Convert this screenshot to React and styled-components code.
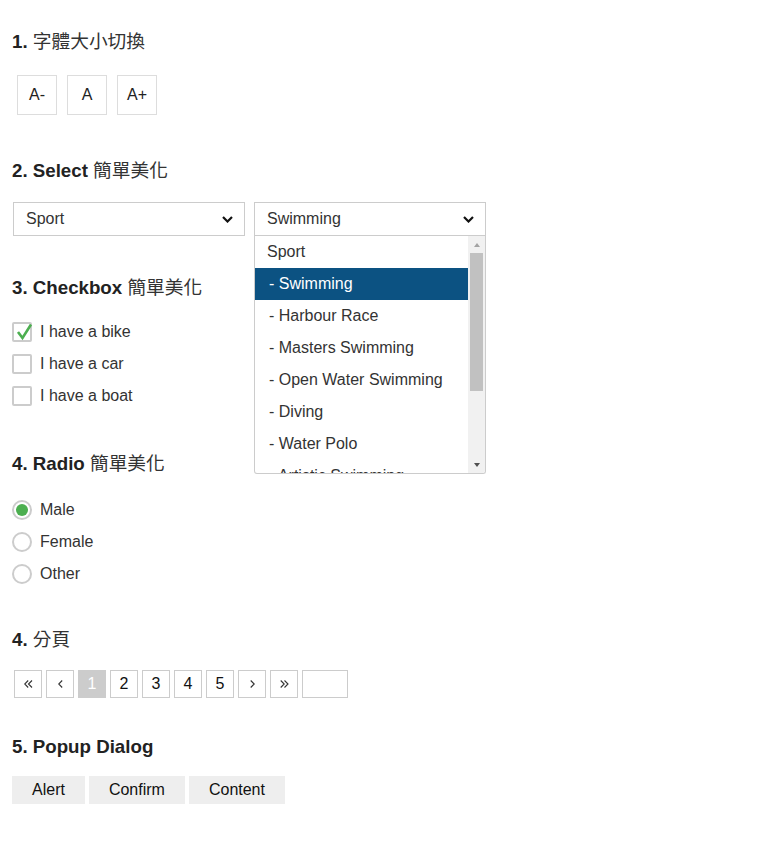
import React, { useState } from 'react';
import styled, { createGlobalStyle } from 'styled-components';

const GlobalStyle = createGlobalStyle`
  body {
    margin: 0;
    background: #fff;
    color: #333;
    font-family: "Liberation Sans", Arial, "Noto Sans CJK TC", sans-serif;
    font-size: 16px;
  }
`;

const sports = [
  { label: 'Sport', sub: false },
  { label: '- Swimming', sub: true },
  { label: '- Harbour Race', sub: true },
  { label: '- Masters Swimming', sub: true },
  { label: '- Open Water Swimming', sub: true },
  { label: '- Diving', sub: true },
  { label: '- Water Polo', sub: true },
  { label: '- Artistic Swimming', sub: true },
];

const Chevron = () => (
  <svg width="11" height="7" viewBox="0 0 11 7">
    <polyline points="1,1 5.5,5.5 10,1" fill="none" stroke="#111" strokeWidth="2.2" />
  </svg>
);

// pager arrows: dir -1 = left, 1 = right; double draws two angles
const PagerArrow = ({ dir, double }) => {
  const one = x => (dir < 0 ? `${x + 3.5},0.5 ${x},4 ${x + 3.5},7.5` : `${x},0.5 ${x + 3.5},4 ${x},7.5`);
  return (
    <svg width={double ? 9 : 5} height="8" viewBox={`0 0 ${double ? 9 : 5} 8`}>
      <polyline points={one(0.7)} fill="none" stroke="#333" strokeWidth="1.1" />
      {double && <polyline points={one(4.5)} fill="none" stroke="#333" strokeWidth="1.1" />}
    </svg>
  );
};

function SelectBox({ value, open }) {
  return (
    <SelectWrap>
      <SelectField>
        <span>{value}</span>
        <Chevron />
      </SelectField>
      {open && (
        <DropList>
          <Options>
            {sports.map(s => (
              <Option key={s.label} $sub={s.sub} $active={s.label === '- Swimming'}>
                {s.label}
              </Option>
            ))}
          </Options>
          <ScrollBar>
            <Arrow $up $color="#a3a3a3" />
            <Thumb />
            <Arrow $color="#505050" />
          </ScrollBar>
        </DropList>
      )}
    </SelectWrap>
  );
}

export default function App() {
  const [size, setSize] = useState(16);
  return (
    <Page>
      <GlobalStyle />
      <Section $top={30}>
        <Heading $mb={16}>
          1. <Cjk>字體大小切換</Cjk>
        </Heading>
        <Row>
          <FontButton onClick={() => setSize(size - 1)}>A-</FontButton>
          <FontButton onClick={() => setSize(16)}>A</FontButton>
          <FontButton onClick={() => setSize(size + 1)}>A+</FontButton>
        </Row>
      </Section>

      <Section $top={39}>
        <Heading $mb={19}>
          2. Select <Cjk>簡單美化</Cjk>
        </Heading>
        <SelectRow>
          <SelectBox value="Sport" />
          <SelectBox value="Swimming" open />
        </SelectRow>
      </Section>

      <Section $top={40}>
        <Heading $mb={16}>
          3. Checkbox <Cjk>簡單美化</Cjk>
        </Heading>
        {['I have a bike', 'I have a car', 'I have a boat'].map((t, i) => (
          <CheckRow key={t}>
            <Box>
              {i === 0 && (
                <CheckMark width="18" height="18" viewBox="0 0 18 18">
                  <polyline points="3,9 7.5,15 16,1.5" fill="none" stroke="#4caf50" strokeWidth="2.6" />
                </CheckMark>
              )}
            </Box>
            {t}
          </CheckRow>
        ))}
      </Section>

      <Section $top={40}>
        <Heading $mb={18}>
          4. Radio <Cjk>簡單美化</Cjk>
        </Heading>
        {['Male', 'Female', 'Other'].map((t, i) => (
          <CheckRow key={t}>
            <Radio $checked={i === 0} />
            {t}
          </CheckRow>
        ))}
      </Section>

      <Section $top={38}>
        <Heading $mb={18}>
          4. <Cjk>分頁</Cjk>
        </Heading>
        <Pager>
          <PageItem><PagerArrow dir={-1} double /></PageItem>
          <PageItem><PagerArrow dir={-1} /></PageItem>
          <PageItem $active>1</PageItem>
          <PageItem>2</PageItem>
          <PageItem>3</PageItem>
          <PageItem>4</PageItem>
          <PageItem>5</PageItem>
          <PageItem><PagerArrow dir={1} /></PageItem>
          <PageItem><PagerArrow dir={1} double /></PageItem>
          <PageInput />
        </Pager>
      </Section>

      <Section $top={37}>
        <Heading $mb={17}>5. Popup Dialog</Heading>
        <Row>
          <DialogButton>Alert</DialogButton>
          <DialogButton>Confirm</DialogButton>
          <DialogButton>Content</DialogButton>
        </Row>
      </Section>
    </Page>
  );
}

const Page = styled.div`
  padding: 0 12px 40px;
`;

const Section = styled.section`
  margin-top: ${p => p.$top}px;
`;

const Heading = styled.h3`
  height: 24px;
  margin: 0 0 ${p => p.$mb}px;
  font-size: 18.72px;
  line-height: 24px;
  font-weight: 700;
  color: #222;
  white-space: nowrap;
`;

const Cjk = styled.span`
  font-family: "Noto Sans CJK TC", sans-serif;
  font-weight: 400;
  line-height: 1;
  color: #333;
`;

const Row = styled.div`
  display: flex;
  gap: 4px;
`;

const FontButton = styled.button`
  width: 40px;
  height: 40px;
  margin: 5px 0 5px 5px;
  & + & {
    margin-left: 6px;
  }
  padding: 0;
  border: 1px solid #ddd;
  background: #fff;
  color: #222;
  font: 16px "Liberation Sans", Arial, sans-serif;
`;

const SelectRow = styled.div`
  display: flex;
  gap: 9px;
  padding-left: 1px;
`;

const SelectWrap = styled.div`
  position: relative;
  width: 232px;
`;

const SelectField = styled.div`
  display: flex;
  align-items: center;
  justify-content: space-between;
  box-sizing: border-box;
  height: 34px;
  padding: 0 11px 0 12px;
  border: 1px solid #ccc;
  background: #fff;
  color: #333;
`;

const DropList = styled.div`
  position: absolute;
  top: 34px;
  left: 0;
  z-index: 5;
  display: flex;
  box-sizing: border-box;
  width: 232px;
  height: 238px;
  border: 1px solid #ccc;
  border-top: none;
  border-radius: 0 0 3px 3px;
  background: #fff;
  overflow: hidden;
`;

const Options = styled.div`
  flex: 1;
  overflow: hidden;
`;

const Option = styled.div`
  height: 32px;
  line-height: 32px;
  padding-left: ${p => (p.$sub ? 14 : 12)}px;
  white-space: nowrap;
  color: ${p => (p.$active ? '#fff' : '#333')};
  background: ${p => (p.$active ? '#0c5282' : 'transparent')};
`;

const ScrollBar = styled.div`
  display: flex;
  flex-direction: column;
  width: 17px;
  background: #f1f1f1;
`;

const Arrow = styled.div`
  height: 17px;
  display: flex;
  align-items: center;
  justify-content: center;
  order: ${p => (p.$up ? 0 : 3)};
  margin-top: ${p => (p.$up ? 0 : 'auto')};
  &::before {
    content: '';
    border-left: 3.5px solid transparent;
    border-right: 3.5px solid transparent;
    ${p => (p.$up ? 'border-bottom' : 'border-top')}: 4px solid ${p => p.$color};
  }
`;

const Thumb = styled.div`
  order: 1;
  height: 138px;
  margin: 0 2px;
  background: #c1c1c1;
`;

const CheckRow = styled.label`
  display: flex;
  align-items: center;
  gap: 8px;
  height: 32px;
  color: #333;
`;

const Box = styled.span`
  position: relative;
  box-sizing: border-box;
  width: 20px;
  height: 20px;
  border: 2px solid #ccc;
  border-radius: 2px;
  background: #fff;
`;

const CheckMark = styled.svg`
  position: absolute;
  left: 1px;
  top: -1px;
`;

const Radio = styled.span`
  display: flex;
  align-items: center;
  justify-content: center;
  box-sizing: border-box;
  width: 20px;
  height: 20px;
  border: 2px solid #ccc;
  border-radius: 50%;
  &::after {
    content: '';
    display: ${p => (p.$checked ? 'block' : 'none')};
    width: 12px;
    height: 12px;
    border-radius: 50%;
    background: #4caf50;
  }
`;

const Pager = styled.div`
  display: flex;
  gap: 4px;
  padding-left: 2px;
`;

const PageItem = styled.span`
  display: flex;
  align-items: center;
  justify-content: center;
  box-sizing: border-box;
  width: 28px;
  height: 28px;
  border: 1px solid #ccc;
  background: ${p => (p.$active ? '#ccc' : '#fff')};
  color: ${p => (p.$active ? '#fff' : '#111')};
`;

const PageInput = styled.input`
  box-sizing: border-box;
  width: 46px;
  height: 28px;
  margin: 0;
  border: 1px solid #ccc;
  padding: 0 4px;
  font: inherit;
`;

const DialogButton = styled.button`
  height: 28px;
  padding: 0 20px;
  border: none;
  background: #eee;
  color: #111;
  font: 16px "Liberation Sans", Arial, sans-serif;
`;
